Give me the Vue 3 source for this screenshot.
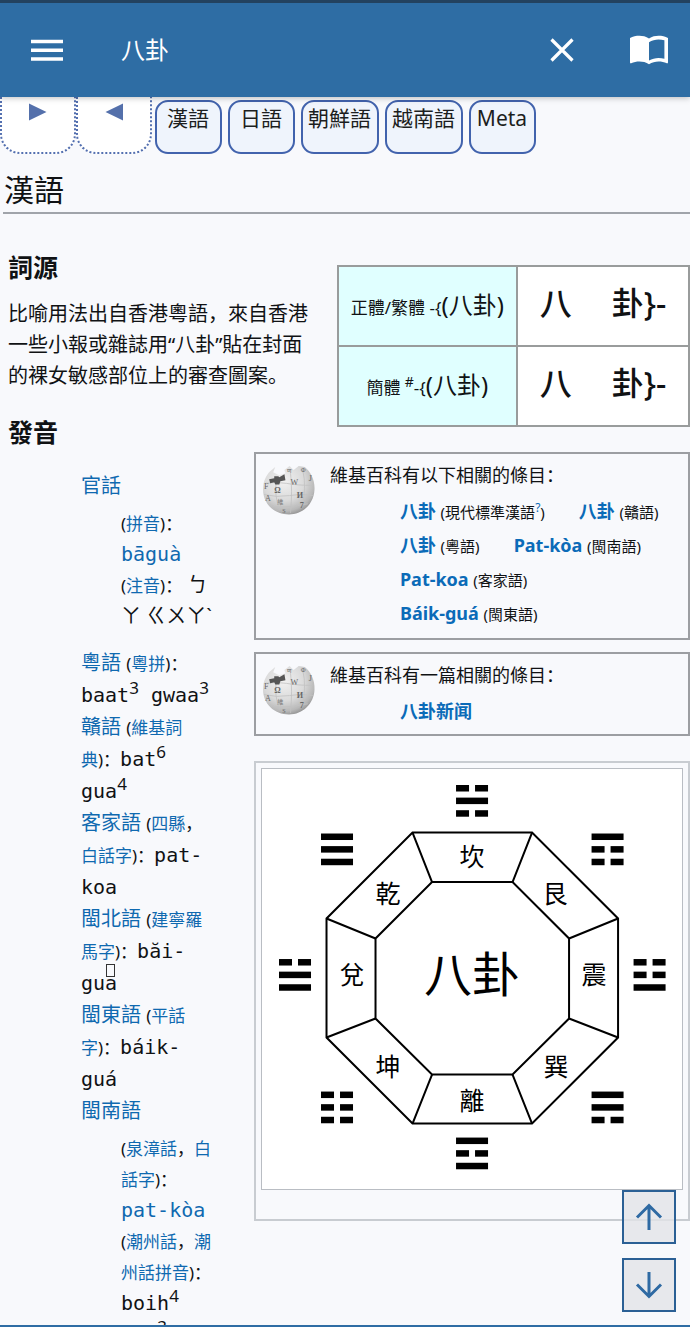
<script setup>
import { ref } from 'vue'

const query = ref('八卦')
const tabs = ['漢語', '日語', '朝鮮語', '越南語', 'Meta']
const forms = [
  { name: '正體/繁體', mark: '' },
  { name: '簡體', mark: '#' }
]

// Each trigram lists its bars from top to bottom; 1 is solid, 0 is broken.
const trigrams = [
  { x: 194, y: 16, bars: [0, 1, 0] },
  { x: 329.5, y: 64.5, bars: [1, 0, 0] },
  { x: 371.5, y: 190, bars: [0, 0, 1] },
  { x: 329.5, y: 322.5, bars: [1, 1, 0] },
  { x: 194, y: 368.5, bars: [1, 0, 1] },
  { x: 59, y: 322.5, bars: [0, 0, 0] },
  { x: 17, y: 190, bars: [0, 1, 1] },
  { x: 59, y: 64.5, bars: [1, 1, 1] }
]
const names = [
  { x: 210, y: 88, t: '坎' },
  { x: 293, y: 125, t: '艮' },
  { x: 332, y: 206, t: '震' },
  { x: 294, y: 298, t: '巽' },
  { x: 210, y: 332, t: '離' },
  { x: 126, y: 298, t: '坤' },
  { x: 90, y: 206, t: '兌' },
  { x: 126, y: 125, t: '乾' }
]
</script>

<template>
  <div class="app">
    <header class="bar">
      <button class="icon" aria-label="選單">
        <svg width="32" height="24" viewBox="0 0 32 24"><path d="M0 3.5H32M0 12.2H32M0 21H32" stroke="#fff" stroke-width="3.6" /></svg>
      </button>
      <input v-model="query" class="query" aria-label="搜尋" />
      <button class="icon" aria-label="清除">
        <svg width="24" height="24" viewBox="0 0 24 24"><path d="M1.5 1.5L22.5 22.5M22.5 1.5L1.5 22.5" stroke="#fff" stroke-width="3.2" fill="none" /></svg>
      </button>
      <button class="icon book" aria-label="書庫">
        <svg width="38" height="30" viewBox="0 0 38 30">
          <path fill="#fff" fill-rule="evenodd" d="M19 3.4C16 1.4 12.600 .7 9.500 .7C6.200 .7 2.700 1.300 0 3V27.600C0 28.300 .6 28.600 1.200 28.300C3.700 27.200 6.500 26.600 9.500 26.600C12.700 26.600 16 27.300 19 29.200C22 27.400 25.300 26.600 28.500 26.600C31.500 26.600 34.300 27.100 36.800 28.300C37.400 28.600 38 28.200 38 27.600V3C35.300 1.300 31.800 .7 28.500 .7C25.400 .7 22 1.400 19 3.400ZM34.400 23.800C32.600 23.200 30.500 23 28.500 23C25.400 23 21.800 23.900 19 25.500V7.300C21.800 5.500 25.400 4.500 28.500 4.500C30.500 4.500 32.600 4.700 34.400 5.300Z" />
        </svg>
      </button>
    </header>

    <main class="page">
      <nav class="tabs">
        <button class="fold" aria-label="展開"><svg width="18" height="18" viewBox="0 0 18 18"><path d="M0 .5L17.500 9L0 17.500Z" fill="#5470ab" /></svg></button>
        <button class="fold" aria-label="收合"><svg width="18" height="18" viewBox="0 0 18 18"><path d="M18 .5L.5 9L18 17.500Z" fill="#5470ab" /></svg></button>
        <a v-for="t in tabs" :key="t" class="tab" href="#">{{ t }}</a>
      </nav>

      <h2>漢語</h2>

      <article>
        <table class="forms">
          <tbody>
            <tr v-for="f in forms" :key="f.name">
              <th scope="row">{{ f.name }} <sup v-if="f.mark">{{ f.mark }}</sup>-{<b>(八卦)</b></th>
              <td><span class="pair"><span>八</span><span>卦}-</span></span></td>
            </tr>
          </tbody>
        </table>

        <h3>詞源</h3>
        <p>比喻用法出自香港粵語，來自香港一些小報或雜誌用“八卦”貼在封面的裸女敏感部位上的審查圖案。</p>

        <aside class="related first">
          <svg class="globe" viewBox="0 0 52 52">
            <defs>
              <radialGradient id="ball" cx=".4" cy=".32" r=".72">
                <stop offset="0" stop-color="#f1f1f1" /><stop offset=".55" stop-color="#dadada" /><stop offset=".85" stop-color="#b8b8b8" /><stop offset="1" stop-color="#909090" />
              </radialGradient>
              <symbol id="globe" viewBox="0 0 52 52">
                <path fill="url(#ball)" d="M8 7L13 3L11 8L17 11L23 9L22 6L27 2L31 6L36 2L42 3C48 8 52 16 51.500 25C51 39 40 49.500 26.500 49.500C12 49.500 1 39 1 25C1 17 4 11 8 7Z" />
                <path fill="none" stroke="#c2c2c2" stroke-width=".8" d="M3 19Q13 17 24 19T50 21M2 30Q14 33 27 31T50 31M8 41Q22 44 45 39M14 17Q12 30 17 45M28 9Q30 25 28 48M40 6Q44 23 39 43" />
                <path fill="#555" d="M7 15L12 14L12 12L16 12L17 13L22 10L23 16L18 17L17 20L13 20L12 18L8 19Z" />
                <g fill="#666" font-family="Liberation Serif, serif" font-size="8">
                  <text x="12" y="28" font-weight="bold">Ω</text><text x="28" y="21">W</text><text x="34" y="33" font-weight="bold">И</text><text x="37" y="43" font-weight="bold">7</text><text x="46" y="17">J</text><text x="2" y="25">F</text><text x="3" y="36">A</text><text x="25" y="9" font-size="6">ण</text><text x="38" y="8" font-size="6">Ф</text><text x="20" y="48" font-size="6">S</text>
                </g>
                <text x="15" y="39" fill="#777" font-family="Noto Sans CJK SC, sans-serif" font-size="6">維</text>
              </symbol>
            </defs>
            <use href="#globe" />
          </svg>
          <div class="text">
            <div>維基百科有以下相關的條目：</div>
            <ul>
              <li><a href="#">八卦</a> <small>(現代標準漢語<sup><a href="#">?</a></sup>)</small></li>
              <li><a href="#">八卦</a> <small>(贛語)</small></li>
              <li><a href="#">八卦</a> <small>(粵語)</small></li>
              <li><a href="#">Pat-kòa</a> <small>(閩南語)</small></li>
              <li><a href="#">Pat-koa</a> <small>(客家語)</small></li>
              <li><a href="#">Báik-guá</a> <small>(閩東語)</small></li>
            </ul>
          </div>
        </aside>

        <aside class="related">
          <svg class="globe" viewBox="0 0 52 52"><use href="#globe" /></svg>
          <div class="text">
            <div>維基百科有一篇相關的條目：</div>
            <ul><li><a href="#">八卦新闻</a></li></ul>
          </div>
        </aside>

        <figure>
          <svg class="bagua" viewBox="0 0 420 420" role="img" aria-label="八卦">
            <g fill="none" stroke="#000" stroke-width="2">
              <path d="M150.500 63.500H270L356 149.500V268.500L270 354.500H150.500L64.500 268.500V149.500Z" />
              <path d="M170 113H250.500L307 169.500V249.500L250.500 305.500H170L113.500 249.500V169.500Z" />
              <path d="M150.500 63.500L170 113M270 63.500L250.500 113M356 149.500L307 169.500M356 268.500L307 249.500M270 354.500L250.500 305.500M150.500 354.500L170 305.500M64.500 268.500L113.500 249.500M64.500 149.500L113.500 169.500" />
            </g>
            <g v-for="(g, i) in trigrams" :key="i">
              <template v-for="(b, j) in g.bars" :key="j">
                <rect v-if="b" :x="g.x" :y="g.y + j * 12.6" width="32" height="6.500" />
                <template v-else>
                  <rect :x="g.x" :y="g.y + j * 12.6" width="13" height="6.500" />
                  <rect :x="g.x + 19" :y="g.y + j * 12.6" width="13" height="6.500" />
                </template>
              </template>
            </g>
            <g text-anchor="middle" font-size="25">
              <text v-for="n in names" :key="n.t" :x="n.x" :y="n.y + 9">{{ n.t }}</text>
              <text x="210" y="223" font-size="48">八卦</text>
            </g>
          </svg>
        </figure>

        <h3 class="sound">發音</h3>
        <ul class="readings">
          <li><a href="#">官話</a>
            <ul>
              <li><small>(<a href="#">拼音</a>)：</small><br /><a href="#" class="mono">bāguà</a></li>
              <li><small>(<a href="#">注音</a>)：</small><span class="zhuyin"> ㄅ<br />ㄚ ㄍㄨㄚˋ</span></li>
            </ul>
          </li>
          <li><a href="#">粵語</a> <small>(<a href="#">粵拼</a>)：</small><br /><span class="mono">baat<sup>3</sup> gwaa<sup>3</sup></span></li>
          <li><a href="#">贛語</a> <small>(<a href="#">維基詞<br />典</a>)：</small><span class="mono">bat<sup>6</sup><br />gua<sup>4</sup></span></li>
          <li><a href="#">客家語</a> <small>(<a href="#">四縣</a>，<br /><a href="#">白話字</a>)：</small><span class="mono">pat-<br />koa</span></li>
          <li><a href="#">閩北語</a> <small>(<a href="#">建寧羅<br />馬字</a>)：</small><span class="mono">băi-<br />gu<span class="boxed">a</span></span></li>
          <li><a href="#">閩東語</a> <small>(<a href="#">平話<br />字</a>)：</small><span class="mono">báik-<br />guá</span></li>
          <li><a href="#">閩南語</a>
            <ul>
              <li><small>(<a href="#">泉漳話</a>，<a href="#">白<br />話字</a>)：</small><br /><a href="#" class="mono">pat-kòa</a></li>
              <li><small>(<a href="#">潮州話</a>，<a href="#">潮<br />州話拼音</a>)：</small><br /><span class="mono">boih<sup>4</sup><br />gua<sup>3</sup></span></li>
            </ul>
          </li>
        </ul>
      </article>
    </main>

    <div class="jump">
      <button aria-label="上一個"><svg width="28" height="28" viewBox="0 0 28 28"><path d="M14 27V3M2 14.500L14 2.500L26 14.500" /></svg></button>
      <button aria-label="下一個"><svg width="28" height="28" viewBox="0 0 28 28"><path d="M14 1V25M2 13.500L14 25.500L26 13.500" /></svg></button>
    </div>
  </div>
</template>

<style>
body {
  background: #f8f9fc;
}
</style>

<style scoped>
.app {
  position: relative;
  display: flex;
  flex-direction: column;
  box-sizing: border-box;
  height: 100vh;
  overflow: hidden;
  border-bottom: 2px solid #2e6da4;
  background: #f8f9fc;
  color: #101214;
  font-family: "Noto Sans", "Noto Sans CJK SC", sans-serif;
  font-size: 20px;
}
button {
  padding: 0;
  border: 0;
  background: none;
}
svg {
  display: block;
}
a {
  color: #0f69b0;
  text-decoration: none;
}
ul {
  margin: 0;
  padding: 0;
  list-style: none;
}
.bar {
  z-index: 1;
  display: flex;
  flex: none;
  align-items: center;
  box-sizing: border-box;
  height: 97px;
  padding: 0 22px 0 31px;
  border-top: 3px solid #23425f;
  background: #2e6da4;
  box-shadow: 0 1px 6px rgba(0, 0, 0, 0.25);
}
.query {
  flex: 1;
  min-width: 0;
  margin-left: 58px;
  padding: 0;
  border: 0;
  outline: 0;
  background: none;
  color: #fff;
  font: 24px/36px "Noto Sans", "Noto Sans CJK SC", sans-serif;
}
.book {
  margin-left: 56px;
}
.page {
  flex: 1;
  min-height: 0;
  overflow: hidden;
}
.tabs {
  display: flex;
  align-items: flex-end;
  height: 57px;
}
.fold {
  display: flex;
  justify-content: center;
  box-sizing: border-box;
  width: 76px;
  height: 76px;
  padding-top: 23px;
  border: 2px dotted #5470b0;
  border-radius: 20px;
  background: #fff;
}
.tab {
  box-sizing: border-box;
  height: 54px;
  margin-left: 6px;
  padding: 0 6px 0 5px;
  min-width: 67px;
  border: 2px solid #4263ad;
  border-radius: 13px;
  background: #eff4fc;
  color: #1c1e20;
  font-size: 21px;
  line-height: 32px;
  text-align: center;
}
.tab:nth-child(3) {
  margin-left: 3px;
}
h2 {
  margin: 14px 0 0 3px;
  border-bottom: 2px solid #a0a4aa;
  padding-left: 1px;
  font-size: 30px;
  font-weight: 400;
  line-height: 44px;
}
article {
  padding-top: 35px;
}
h3 {
  margin: 0;
  padding-left: 8px;
  font-size: 25px;
  line-height: 36px;
}
p {
  margin: 13px 0 0;
  padding-left: 8px;
  line-height: 31px;
}
.forms {
  float: right;
  width: 51.2%;
  margin: 16px 0 0 20px;
  border-collapse: collapse;
  background: #fff;
}
.forms th,
.forms td {
  height: 78px;
  padding: 0;
  border: 2px solid #999c9c;
}
.forms th {
  width: 51%;
  background: #e0ffff;
  font-size: 17px;
  font-weight: 400;
  line-height: 32px;
}
.forms td {
  height: 72px;
  padding-bottom: 6px;
}
.forms b {
  font-size: 24px;
  font-weight: 400;
}
.forms sup {
  font-size: 14px;
  line-height: 0;
}
.pair {
  display: flex;
  justify-content: center;
  gap: 40px;
  font-size: 32px;
  font-weight: 500;
  line-height: 40px;
}
.related {
  float: right;
  clear: right;
  display: flex;
  box-sizing: border-box;
  width: 63.2%;
  margin: 0 0 12px 20px;
  padding: 4px 6px 6px;
  border: 2px solid #9c9ea2;
  background: #f8f9fc;
  font-size: 18px;
}
.first {
  margin-top: 25px;
  padding-bottom: 8px;
}
.globe {
  flex: none;
  width: 53px;
  height: 53px;
  margin: 6px 15px 0 0;
}
.text {
  flex: 1;
  line-height: 34px;
}
.text ul {
  display: flex;
  flex-wrap: wrap;
  column-gap: 34px;
  padding: 2px 0 0 70px;
}
.text a {
  color: #0b6bb8;
  font-weight: 700;
}
.text small {
  font-size: 15px;
  line-height: 1;
}
.text sup {
  font-size: 12px;
  line-height: 0;
}
.text sup a {
  font-weight: 400;
}
figure {
  float: right;
  clear: right;
  box-sizing: border-box;
  width: 63.2%;
  margin: 13px 0 0 20px;
  padding: 5px 5px 29px;
  border: 2px solid #c8ccd1;
}
.bagua {
  box-sizing: border-box;
  width: 100%;
  border: 1px solid #b9bdc3;
  background: #fff;
}
.sound {
  padding-top: 23px;
}
.readings {
  padding: 20px 0 0 81px;
  line-height: 32px;
  white-space: nowrap;
}
.readings ul {
  padding: 5px 0 16px 40px;
  line-height: 31px;
}
.readings small {
  font-size: 17px;
  line-height: 1;
}
.readings sup {
  font-family: "Noto Sans", sans-serif;
  font-size: 17px;
  line-height: 0;
}
.mono {
  font-family: "DejaVu Sans Mono", monospace;
  line-height: 1;
}
.boxed {
  position: relative;
}
.boxed::before {
  content: "";
  position: absolute;
  left: 1px;
  top: -7px;
  width: 7px;
  height: 11px;
  border: 1px solid #333;
}
.jump {
  position: absolute;
  z-index: 2;
  right: 14px;
  bottom: 13px;
  display: flex;
  flex-direction: column;
  gap: 14px;
}
.jump button {
  display: flex;
  align-items: center;
  justify-content: center;
  width: 54px;
  height: 54px;
  border: 2px solid #2b6095;
  background: rgba(226, 228, 231, 0.8);
}
.jump path {
  fill: none;
  stroke: #2f6aa3;
  stroke-width: 3;
}
</style>
